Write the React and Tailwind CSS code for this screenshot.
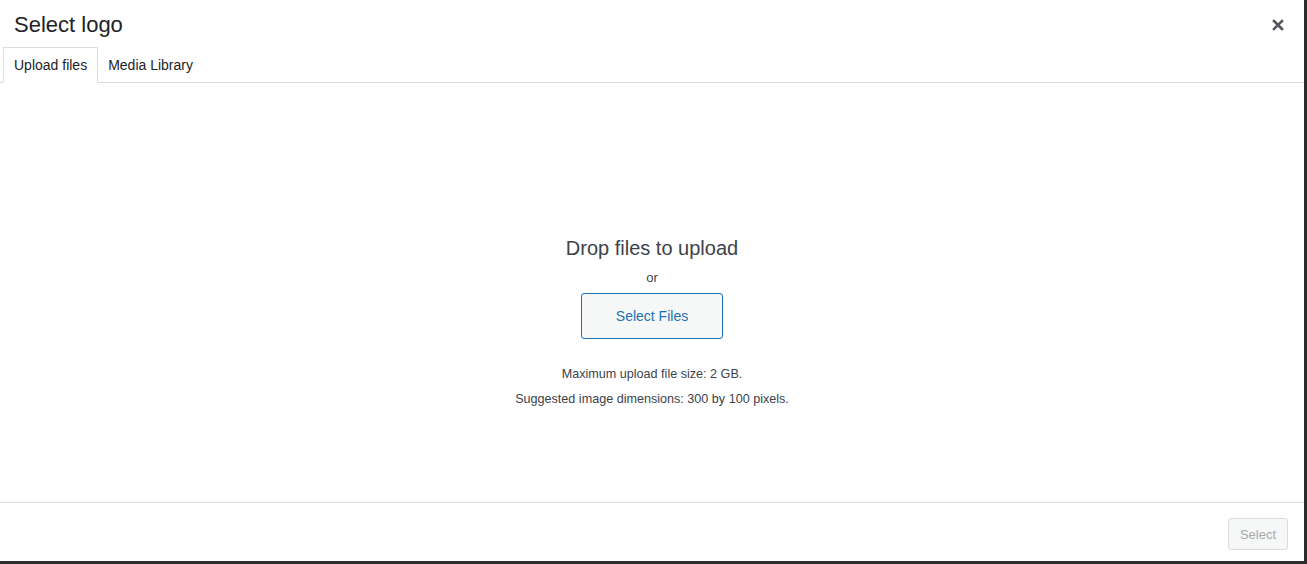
const tabs = ["Upload files", "Media Library"];

const App = () => {
  return (
    <div className="flex h-[564px] w-[1307px] bg-[#2c2c2c] font-['Liberation_Sans',sans-serif]">
      <div className="mb-[3px] mr-[3px] flex flex-1 flex-col bg-white">
        <header className="flex h-[47px] items-center justify-between pl-[14px] pr-[20px] pt-[2px]">
          <h1 className="text-[22px] leading-none text-[#1d2327]">Select logo</h1>
          <button type="button" className="text-[#50575e]" aria-label="Close">
            <svg viewBox="0 0 12 12" className="h-3 w-3">
              <path d="M2 2l8 8M10 2l-8 8" stroke="currentColor" strokeWidth="2.6" strokeLinecap="square" />
            </svg>
          </button>
        </header>

        <nav className="flex border-b border-[#dcdcde] pl-[3px]">
          {tabs.map((tab, index) => (
            <div
              key={tab}
              className={
                index === 0
                  ? "-mb-px flex h-[36px] items-center border border-b-white border-[#dcdcde] px-[10px] text-sm text-[#1d2327]"
                  : "flex h-[35px] items-center px-[10px] text-sm text-[#1d2327]"
              }
            >
              {tab}
            </div>
          ))}
        </nav>

        <main className="flex flex-1 flex-col items-center pt-[152px] text-[#3c434a]">
          <p className="text-[20px] leading-[26px]">Drop files to upload</p>
          <p className="mt-[8px] text-[13px] leading-[18px]">or</p>
          <button
            type="button"
            className="mt-[6px] h-[46px] w-[142px] rounded-[3px] border border-[#2271b1] bg-[#f6f7f7] text-sm text-[#2271b1]"
          >
            Select Files
          </button>
          <p className="mt-[26px] text-[12.6px] leading-[18px]">Maximum upload file size: 2 GB.</p>
          <p className="mt-[7px] text-[12.6px] leading-[18px]">Suggested image dimensions: 300 by 100 pixels.</p>
        </main>

        <footer className="flex h-[59px] items-end justify-end border-t border-[#dcdcde] pb-[11px] pr-[16px]">
          <button
            type="button"
            disabled
            className="h-[32px] w-[60px] rounded-[3px] border border-[#dcdcde] bg-[#f6f7f7] pt-px text-[13px] text-[#a7aaad]"
          >
            Select
          </button>
        </footer>
      </div>
    </div>
  );
};

export default App;
